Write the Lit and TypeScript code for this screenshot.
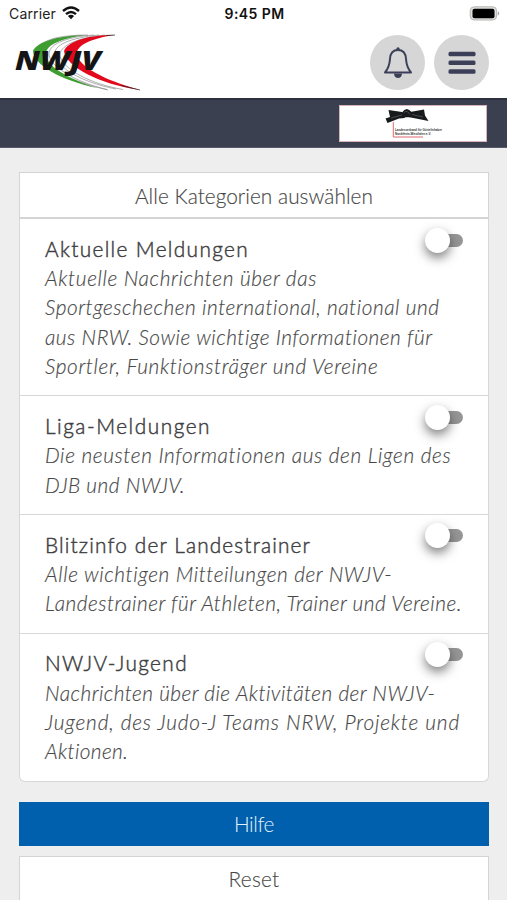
import { LitElement, html, css } from "lit";
import { customElement, property } from "lit/decorators.js";

interface Line { text: string; width: number }
interface Category { title: Line; lines: Line[] }

const categories: Category[] = [
  { title: { text: "Aktuelle Meldungen", width: 204 }, lines: [
    { text: "Aktuelle Nachrichten über das", width: 272 },
    { text: "Sportgeschechen international, national und", width: 394 },
    { text: "aus NRW. Sowie wichtige Informationen für", width: 387 },
    { text: "Sportler, Funktionsträger und Vereine", width: 333 },
  ] },
  { title: { text: "Liga-Meldungen", width: 166 }, lines: [
    { text: "Die neusten Informationen aus den Ligen des", width: 406 },
    { text: "DJB und NWJV.", width: 140 },
  ] },
  { title: { text: "Blitzinfo der Landestrainer", width: 266 }, lines: [
    { text: "Alle wichtigen Mitteilungen der NWJV-", width: 346 },
    { text: "Landestrainer für Athleten, Trainer und Vereine.", width: 417 },
  ] },
  { title: { text: "NWJV-Jugend", width: 143 }, lines: [
    { text: "Nachrichten über die Aktivitäten der NWJV-", width: 390 },
    { text: "Jugend, des Judo-J Teams NRW, Projekte und", width: 415 },
    { text: "Aktionen.", width: 83 },
  ] },
];

/* A single line of text whose tracking is set so that it fills a given width. */
@customElement("fit-line")
export class FitLine extends LitElement {
  @property() text = "";
  @property({ type: Number }) width = 0;

  static styles = css`
    :host { display: inline-block; white-space: nowrap; }
  `;

  protected async updated() {
    await document.fonts.ready;
    const span = this.renderRoot.querySelector("span")!;
    span.style.letterSpacing = "0px";
    const natural = span.getBoundingClientRect().width;
    span.style.letterSpacing = `${(this.width - natural) / this.text.length}px`;
  }

  render() { return html`<span>${this.text}</span>`; }
}

@customElement("toggle-switch")
export class ToggleSwitch extends LitElement {
  static styles = css`
    :host { display: flex; align-items: center; width: 39px; height: 26px; }
    .knob { position: relative; z-index: 1; width: 25px; height: 25px; flex: none; border-radius: 50%; background: #fff; box-shadow: 0 5px 11px rgba(0,0,0,.5); }
    .track { width: 28px; height: 13px; margin-left: -15px; flex: none; border-radius: 6.5px; background: #969696; }
  `;
  render() { return html`<div class="knob"></div><div class="track"></div>`; }
}

@customElement("app-root")
export class AppRoot extends LitElement {
  static styles = css`
    :host { display: block; height: 900px; overflow: hidden; background: #eee; font-family: Lato, sans-serif; font-size: 20.8px; }
    * { box-sizing: border-box; }
    svg { display: block; flex: none; }
    .status { display: grid; grid-template-columns: 1fr auto 1fr; align-items: center; height: 28px; padding: 0 7px 2px 9px; background: #fff; color: #222; font: 14px Inter, sans-serif; }
    .carrier { display: flex; align-items: center; gap: 6px; }
    .time { font-weight: 600; color: #111; }
    .battery { justify-self: end; }
    .head { display: flex; align-items: center; height: 70px; padding: 0 18px 0 10px; background: #fff; }
    .logo { margin-right: auto; }
    .round { display: grid; place-items: center; width: 55px; height: 55px; margin: 0 0 1px 9px; border-radius: 50%; background: #d6d6d6; }
    .band { display: flex; justify-content: flex-end; height: 50px; padding: 5px 20px 0 0; background: #3b4051; border-top: 2px solid #2d3140; border-bottom: 1px solid #565b68; }
    .sponsor { width: 148px; height: 37px; background: #fff; border: 1px solid #d6b4b8; }
    .main { padding: 24px 18px 0 19px; }
    .all, .reset { display: grid; place-items: center; background: #fff; border: 1.500px solid #d4d4d4; font-weight: 300; color: #484848; -webkit-text-stroke: .15px #484848; }
    .all { height: 47px; border-bottom-width: 2px; }
    .list { background: #fff; border: 1px solid #d8d8d8; border-top: 0; border-radius: 0 0 6px 6px; }
    .item { display: grid; grid-template-columns: 1fr auto; padding: 14.700px 24px 15.100px 25px; line-height: 29.3px; }
    .item + .item { border-top: 1px solid #d8d8d8; }
    .title { color: #404042; font-weight: 300; -webkit-text-stroke: .45px #404042; }
    .toggle { height: 0; margin-top: -6.700px; }
    .desc { grid-column: 1 / -1; font-style: italic; font-weight: 300; color: #484848; -webkit-text-stroke: .15px #484848; }
    .row { height: 29.3px; }
    .help { display: grid; place-items: center; height: 44px; margin: 20px 0 10px; padding-bottom: 1px; background: #0060ad; color: #e3f0fb; font-weight: 300; }
    .reset { height: 47px; padding-bottom: 1px; }
    .mark { font: italic 800 26.5px "Open Sans", sans-serif; fill: #151515; }
    .tiny { font: bold 3.8px "Liberation Sans", sans-serif; fill: #333; }
  `;

  render() {
    return html`
      <div class="status">
        <div class="carrier"><fit-line text="Carrier" width="47"></fit-line>
          <svg width="18" height="14" viewBox="0 0 18 14" fill="none" stroke="#111" stroke-width="2.4">
            <path d="M1 5Q9-2 17 5M4 8.2Q9 3.8 14 8.2"/><path d="M9 13.2 5.9 10Q9 7.6 12.1 10Z" fill="#111" stroke="none"/>
          </svg>
        </div>
        <div class="time"><fit-line text="9:45 PM" width="60"></fit-line></div>
        <svg class="battery" width="31" height="15" viewBox="0 0 31 15">
          <rect x="1.200" y=".8" width="26.4" height="13.200" rx="4" fill="#dededc" stroke="#b5b5b3"/>
          <rect x="3.500" y="2.800" width="22" height="9.400" rx="2" fill="#000"/><path d="M28.8 5.2q3 2.2 0 4.5Z" fill="#aaa"/>
        </svg>
      </div>
      <div class="head">
        <svg class="logo" width="134" height="62" viewBox="10 32 134 62">
          <path d="M88 35C57 35 37 42 33 51C34 65 60 80 97 88C65 77 47 66 46 55C45 45 61 38 88 35Z" fill="#3f9e32"/>
          <g fill="none" stroke="#8b8b8b" stroke-width=".7">
            <path d="M94 35C64 37 48 45 49 55C51 66 72 81 107 89.500"/><path d="M99 35C70 38 53 45 55 55C57 67 80 82 116 89"/>
            <path d="M105 35C76 38 59 46 60 56C63 69 90 84 123 89.500"/><path d="M88 35C70 35 55 37 47 41M80 82Q94 87 108 90"/>
          </g>
          <path d="M115 35C83 35 67 43 64 51C66 67 99 84 140 90C104 80 78 66 77 54C76 45 93 38 115 35Z" fill="#e2091c"/>
          <path d="M106 35.500 115 35M121 85.500 140 90" stroke="#222" stroke-width=".7"/>
          <text class="mark" x="15" y="70" textLength="86" lengthAdjust="spacingAndGlyphs">NWJV</text>
        </svg>
        <div class="round">
          <svg width="30" height="32" viewBox="0 0 30 32" fill="none" stroke="#3b4058" stroke-width="2" stroke-linejoin="round">
            <path d="M2 25.500C5 22 6.500 18.500 7 12C7.300 6 10.500 3 15 3C19.500 3 22.700 6 23 12C23.500 18.500 25 22 28 25.500Z"/>
            <path d="M11 26.500H19C19 32.500 11 32.500 11 26.500Z" fill="#3b4058" stroke="none"/><circle cx="15" cy="2" r="1.700" fill="#3b4058" stroke="none"/>
          </svg>
        </div>
        <div class="round">
          <svg width="28" height="24" viewBox="0 0 28 24" fill="#3b4058">
            <rect x=".5" y=".7" width="27" height="4.600" rx="1.500"/><rect x=".5" y="9.500" width="27" height="4.500" rx="1.500"/><rect x=".5" y="18.300" width="27" height="4.500" rx="1.500"/>
          </svg>
        </div>
      </div>
      <div class="band">
        <div class="sponsor">
          <svg width="146" height="35" viewBox="340 106 146 35">
            <path d="M393.300 122V137H423" fill="none" stroke="#dc6871"/>
            <g fill="#18191d">
              <path d="M388.500 110 402 112 405 118 399 118.500 387.500 123 385.500 118.500 390 117Z"/>
              <path d="M410 112 424 109.500 425 115.500 428.500 121 416 118.500 408 117Z"/>
              <path d="M402 112.500Q406.500 105.500 412 112.500L412 117 402 117.500Z"/>
            </g>
            <path d="M404 112.500Q407 109.500 410 114.500M391 118 402 115M412 114.500 423 117" fill="none" stroke="#686a70" stroke-width=".6"/>
            <text class="tiny" x="395" y="131" textLength="47" lengthAdjust="spacingAndGlyphs">Landesverband für Gürtelinhaber</text>
            <text class="tiny" x="395" y="135.400" textLength="36" lengthAdjust="spacingAndGlyphs">Nordrhein-Westfalen e.V.</text>
          </svg>
        </div>
      </div>
      <div class="main">
        <div class="all"><fit-line text="Alle Kategorien auswählen" width="238"></fit-line></div>
        <div class="list">
          ${categories.map((c) => html`
            <div class="item">
              <div class="title"><fit-line .text=${c.title.text} .width=${c.title.width}></fit-line></div>
              <div class="toggle"><toggle-switch></toggle-switch></div>
              <div class="desc">${c.lines.map((l) => html`<div class="row"><fit-line .text=${l.text} .width=${l.width}></fit-line></div>`)}</div>
            </div>`)}
        </div>
        <div class="help"><fit-line text="Hilfe" width="40"></fit-line></div>
        <div class="reset"><fit-line text="Reset" width="51"></fit-line></div>
      </div>`;
  }
}
